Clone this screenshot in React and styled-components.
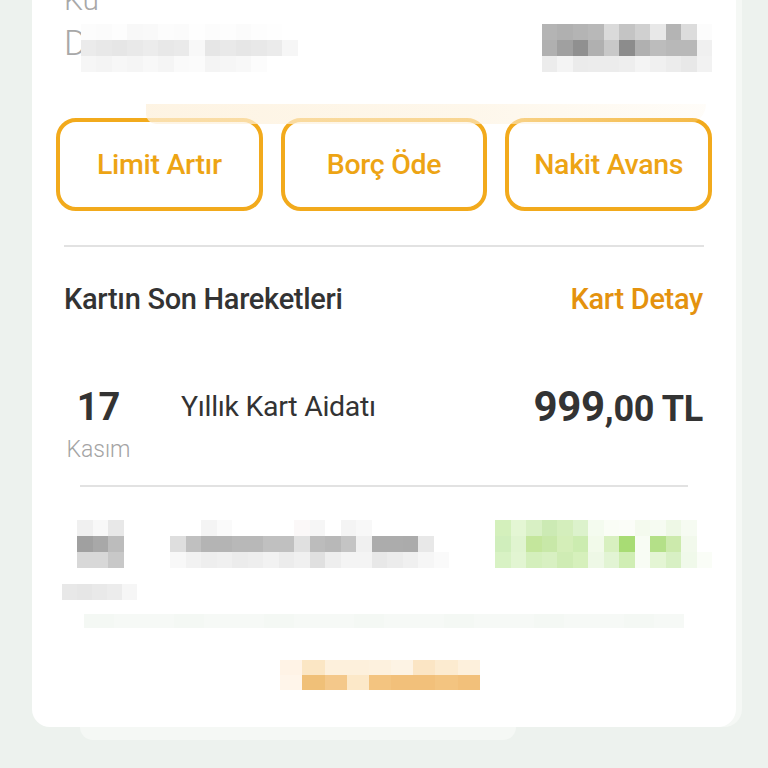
import React from "react";
import styled, { createGlobalStyle } from "styled-components";

const Global = createGlobalStyle`
  html, body { margin: 0; padding: 0; background: #edf2ee; }
  body { font-family: Roboto, "Noto Sans", Arial, sans-serif; }
  * { box-sizing: border-box; }
`;

const Page = styled.div`
  width: 768px;
  height: 768px;
  overflow: hidden;
  background: #edf2ee;
  padding: 0 32px;
`;

const Card = styled.div`
  position: relative;
  margin-top: -24px;
  background: #fff;
  border-radius: 0 0 18px 18px;
  padding: 0 24px 37px;
  box-shadow: 6px 0 0 #f5f8f5;
`;

const BackCard = styled.div`
  margin-left: 48px;
  width: 436px;
  height: 13px;
  background: #f5f8f5;
  border-radius: 0 0 14px 14px;
`;

const InfoRow = styled.div`
  height: ${(p) => p.$h || 48}px;
  display: flex;
  align-items: flex-start;
  justify-content: space-between;
  padding: 0 0 0 8px;
`;

const InfoLabel = styled.div`
  display: flex;
  align-items: flex-start;
  font-size: ${(p) => p.$size || 30}px;
  font-weight: 300;
  line-height: 48px;
  color: #a8a8a8;
`;

const MosaicGrid = styled.div`
  display: grid;
  grid-template-columns: repeat(${(p) => p.$cols}, ${(p) => p.$cw}px);
  grid-auto-rows: ${(p) => p.$ch}px;
  margin-top: ${(p) => p.$top || 0}px;
  margin-left: ${(p) => p.$left || 0}px;
  margin-right: ${(p) => p.$right || 0}px;
  flex-shrink: 0;
`;

const Cell = styled.span`
  display: block;
`;

function Mosaic({ rows, cw = 16, ch = 16, top, left, right }) {
  const cols = rows[0].length;
  return (
    <MosaicGrid $cols={cols} $cw={cw} $ch={ch} $top={top} $left={left} $right={right}>
      {rows.flatMap((r, i) =>
        r.map((c, j) => <Cell key={i + "-" + j} style={{ background: c }} />)
      )}
    </MosaicGrid>
  );
}

const ButtonRow = styled.div`
  position: relative;
  margin-top: 50px;
  display: grid;
  grid-template-columns: repeat(3, 1fr);
  gap: 18px;
`;

const ActionButton = styled.button`
  height: 93px;
  border: 4px solid #f2aa1c;
  border-radius: 20px;
  background: #fff;
  color: #eda414;
  font-family: Roboto, Arial, sans-serif;
  font-size: 28.5px;
  font-weight: 500;
  letter-spacing: -0.3px;
  padding: 0;
`;

const Glare = styled.div`
  position: absolute;
  left: 90px;
  top: -14px;
  width: 560px;
  height: 20px;
  background: linear-gradient(90deg, rgba(253,240,218,0.75), rgba(253,242,222,0.6) 60%, rgba(253,242,222,0.2));
  border-radius: 0 0 80px 40px;
  pointer-events: none;
`;

const Divider = styled.div`
  height: 2px;
  background: #e2e2e2;
  margin: ${(p) => p.$m};
`;

const Header = styled.div`
  display: flex;
  align-items: center;
  justify-content: space-between;
  height: 52px;
  margin: 26px 9px 0 8px;
`;

const Title = styled.div`
  font-size: 29px;
  font-weight: 500;
  color: #333;
  letter-spacing: -0.3px;
`;

const Link = styled.div`
  font-size: 29px;
  font-weight: 500;
  color: #e4920e;
  letter-spacing: -0.3px;
`;

const TxRow = styled.div`
  display: flex;
  align-items: flex-start;
  margin: 62px 9px 0 0;
  height: 92px;
`;

const DateCol = styled.div`
  width: 85px;
  display: flex;
  flex-direction: column;
  align-items: center;
`;

const Day = styled.div`
  font-size: 38px;
  font-weight: 700;
  line-height: 40px;
  color: #333;
`;

const Month = styled.div`
  margin-top: 9px;
  font-size: 23px;
  font-weight: 300;
  line-height: 28px;
  color: #a4a4a4;
`;

const Desc = styled.div`
  margin-left: 40px;
  flex: 1;
  font-size: 28.5px;
  font-weight: 400;
  line-height: 40px;
  color: #333;
  letter-spacing: -0.3px;
`;

const Amount = styled.div`
  font-weight: 700;
  color: #333;
  line-height: 40px;
  letter-spacing: -0.3px;
`;

const Big = styled.span`
  font-size: 42px;
`;

const Small = styled.span`
  font-size: 36px;
`;

const BlurRow = styled.div`
  display: flex;
  align-items: flex-start;
  margin-top: 33px;
  height: 48px;
`;

const BlurSub = styled.div`
  margin-top: 16px;
  margin-left: 6px;
  display: flex;
`;

const Spacer = styled.div`
  flex: 1;
`;

const Center = styled.div`
  display: flex;
  justify-content: center;
  margin-top: ${(p) => p.$top}px;
  padding-right: ${(p) => p.$pr || 0}px;
`;

const W = "#ffffff";

const row1Left = [["#fafafa", "#f3f3f3", "#eeeeee", "#efefef", "#ececec", "#eeeeee", "#efefef", "#f0f0f0", "#ededed"]];
const row1Right = [
  ["#f6f6f6", "#e4e4e4", "#d8d8d8", "#e0e0e0", "#dcdedc", "#f0f0f0", "#d4d4d4", "#e0e0e0", "#f0f0f0", "#cccccc", "#d8d8d8", "#e8e8e8", "#e0e0e0", "#dcdcdc", "#f2f2f2"],
  ["#eeeeee", "#bbbbbb", "#a8a8a8", "#c8c8c8", "#c0c4c0", "#e6e6e6", "#a8a8a8", "#c8c8c8", "#e8e8e8", "#989898", "#b0b0b0", "#d8d8d8", "#c8c8c8", "#b8b8b8", "#e8e8e8"],
];
const row2Left = [
  ["#fcfcfc", "#fbfbfb", "#fdfdfd", "#f8f8f8", "#f9f9f9", "#fcfcfc", "#fbfbfb", "#fefefe", "#fcfcfc", "#fdfdfd", "#fbfbfb", "#fdfdfd", "#fefefe", W],
  ["#ebebeb", "#e8e8e8", "#e6e6e6", "#e9e9e9", "#ececec", "#e8e8e8", "#eaeaea", "#f8f8f8", "#e6e6e6", "#e9e9e9", "#e6e6e6", "#e8e8e8", "#ebebeb", "#f6f6f6"],
  ["#f6f6f6", "#f4f4f4", "#f7f7f7", "#f5f5f5", "#f8f8f8", "#f5f5f5", "#fafafa", "#fbfbfb", "#f4f4f4", "#f6f6f6", "#f8f8f8", "#fcfcfc", W, W],
];
const row2Right = [
  ["#b4b4b4", "#b0b0b0", "#b4b4b4", "#b8b8b8", "#dadada", "#c4c4c4", "#d0d0d0", "#e8e8e8", "#b4b4b4", "#dcdcdc", "#fcfcfc"],
  ["#b0b0b0", "#a0a0a0", "#909090", "#b0b0b0", "#c8c8c8", "#8c8c8c", "#b0b0b0", "#bcbcbc", "#b8b8b8", "#b8b8b8", "#f0f0f0"],
  ["#ececec", "#f4f4f4", "#ebebeb", "#ececec", "#ececec", "#eeeeee", "#f4f4f4", "#f0f0f0", "#ececec", "#e8e8e8", "#f2f2f2"],
];

const txDate = [
  ["#f0f0f0", "#f8f8f8", "#e8e8e8"],
  ["#a0a0a0", "#a8a8a8", "#bcbcbc"],
  ["#d8d8d8", "#d8d8d8", "#c8c8c8"],
];
const txMonth = [["#e8e8e8", "#e6e6e6", "#e9e9e9", "#ececec", "#f6f6f6"]];
const txDesc = [
  [W, W, "#f4f4f4", "#fafafa", W, W, W, W, "#fbf8f8", "#f6f6f6", W, "#f4f4f4", "#f8f8f8", W, W, W, W, W],
  ["#dedede", "#c0c0c0", "#b4b4b4", "#b4b4b4", "#b8b8b8", "#b8b8b8", "#c0c0c0", "#c0c0c0", "#e0e0e0", "#bcbcbc", "#b8b8b8", "#c4c4c4", "#f0f0f0", "#acacac", "#acacac", "#ababab", "#e8e8e8", W],
  ["#f8f8f8", "#f2f2f2", "#eeeeee", "#f0f0f0", "#ececec", "#eeeeee", "#f2f2f2", "#ececec", "#f0f0f0", "#e0e0e0", "#eeeeee", "#f4f4f4", "#f4f4f4", "#e8e8e8", "#ececec", "#f0f0f0", "#f6f6f6", "#fafafa"],
];
const txAmount = [
  ["#d4f0bc", "#e4f6d4", "#d8f0c4", "#cceab4", "#d4eebc", "#dcf2cc", "#f4fbef", "#fafdf6", "#fbfdf8", "#f4faee", "#f6fbf2", "#eef8e6", "#f6fbf2", W],
  ["#d0eebc", "#e0f4d0", "#c4e69c", "#c8e8a8", "#d4eeb8", "#ccecb0", "#f2faea", "#d8f0c0", "#a8dc74", "#f8fcf4", "#b4e088", "#cceaac", "#f2f9ec", W],
  ["#d8f2c4", "#e2f5d2", "#d4efbc", "#d8f0c2", "#cfecb4", "#d6f0bc", "#eef8e6", "#e2f4d4", "#d0eeb4", "#f8fcf4", "#e4f5d4", "#d8f0c4", "#f0f9ea", "#fafdf7"],
];
const faintLine = [Array.from({ length: 20 }, (_, i) => (i % 3 === 0 ? "#f4f8f4" : "#f6f9f6"))];
const orange = [
  ["#fff3e6", "#fbe6c4", "#fdf0dc", "#fdf0dc", "#fdf1de", "#fdf3e4", "#fbe5c4", "#fcebd0", "#fdf0dc"],
  ["#fff5ea", "#f0c078", "#f4c88a", "#fce8c8", "#f3c480", "#f2c07a", "#f2c07a", "#f3c480", "#f2c07a"],
];

export default function App() {
  return (
    <Page>
      <Global />
      <Card>
        <InfoRow $h={44}>
          <InfoLabel>
            Ku
            <Mosaic rows={row1Left} cw={15} ch={16} top={-11} left={-10} />
          </InfoLabel>
          <Mosaic rows={row1Right} cw={15.5} ch={16} top={-11} />
        </InfoRow>
        <InfoRow>
          <InfoLabel $size={35}>
            D
            <Mosaic rows={row2Left} cw={15.5} ch={16} top={4} left={-6} />
          </InfoLabel>
          <Mosaic rows={row2Right} cw={15.5} ch={16} top={4} />
        </InfoRow>

        <ButtonRow>
          <ActionButton>Limit Artır</ActionButton>
          <ActionButton>Borç Öde</ActionButton>
          <ActionButton>Nakit Avans</ActionButton>
          <Glare />
        </ButtonRow>

        <Divider $m="34px 8px 0" />

        <Header>
          <Title>Kartın Son Hareketleri</Title>
          <Link>Kart Detay</Link>
        </Header>

        <TxRow>
          <DateCol>
            <Day>17</Day>
            <Month>Kasım</Month>
          </DateCol>
          <Desc>Yıllık Kart Aidatı</Desc>
          <Amount>
            <Big>999</Big>
            <Small>,00 TL</Small>
          </Amount>
        </TxRow>

        <Divider $m="6px 24px 0" />

        <BlurRow>
          <div>
            <Mosaic rows={txDate} cw={15.5} ch={16} left={21} />
            <BlurSub>
              <Mosaic rows={txMonth} cw={15} ch={16} />
            </BlurSub>
          </div>
          <Mosaic rows={txDesc} cw={15.5} ch={16} left={33} />
          <Spacer />
          <Mosaic rows={txAmount} cw={15.5} ch={16} />
        </BlurRow>

        <Center $top={46}>
          <Mosaic rows={faintLine} cw={30} ch={14} />
        </Center>

        <Center $top={32} $pr={8}>
          <Mosaic rows={orange} cw={22.2} ch={15} />
        </Center>
      </Card>
      <BackCard />
    </Page>
  );
}
